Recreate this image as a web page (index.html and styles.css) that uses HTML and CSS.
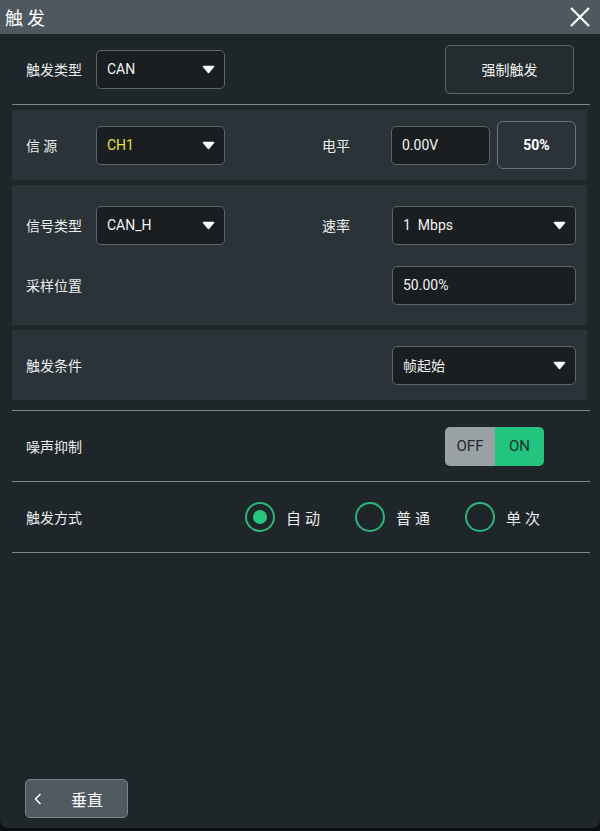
FILE: index.html
```html
<!DOCTYPE html>
<html lang="zh-CN">
<head>
  <meta charset="UTF-8">
  <title>触发</title>
  <link rel="stylesheet" href="styles.css">
</head>
<body>
  <div class="window">
    <div class="header">
      <span class="title">触 发</span>
      <svg class="close" width="22" height="22" viewBox="0 0 22 22">
        <path d="M2 2 L20 20 M20 2 L2 20" stroke="#fff" stroke-width="2.2" fill="none"/>
      </svg>
    </div>

    <div class="content">
      <!-- trigger type -->
      <div class="top-row">
        <span class="label">触发类型</span>
        <div class="select w-small">
          <span>CAN</span>
          <svg class="arrow" width="13" height="9" viewBox="0 0 13 9"><path d="M1.5 1.5 H11.5 L6.5 7.5 Z" fill="#fff" stroke="#fff" stroke-width="1.6" stroke-linejoin="round"/></svg>
        </div>
        <button class="force">强制触发</button>
      </div>

      <div class="section s-short">
        <span class="label">信 源</span>
        <div class="select w-small">
          <span class="yellow">CH1</span>
          <svg class="arrow" width="13" height="9" viewBox="0 0 13 9"><path d="M1.5 1.5 H11.5 L6.5 7.5 Z" fill="#fff" stroke="#fff" stroke-width="1.6" stroke-linejoin="round"/></svg>
        </div>
        <span></span>
        <span class="label">电平</span>
        <div class="level">
          <div class="input w-level">0.00V</div>
          <button class="half">50%</button>
        </div>
      </div>

      <div class="section s-tall">
        <span class="label">信号类型</span>
        <div class="select w-small">
          <span>CAN_H</span>
          <svg class="arrow" width="13" height="9" viewBox="0 0 13 9"><path d="M1.5 1.5 H11.5 L6.5 7.5 Z" fill="#fff" stroke="#fff" stroke-width="1.6" stroke-linejoin="round"/></svg>
        </div>
        <span></span>
        <span class="label">速率</span>
        <div class="select">
          <span>1&nbsp; Mbps</span>
          <svg class="arrow" width="13" height="9" viewBox="0 0 13 9"><path d="M1.5 1.5 H11.5 L6.5 7.5 Z" fill="#fff" stroke="#fff" stroke-width="1.6" stroke-linejoin="round"/></svg>
        </div>

        <span class="label">采样位置</span>
        <span></span>
        <span></span>
        <span></span>
        <div class="input">50.00%</div>
      </div>

      <div class="section s-short">
        <span class="label">触发条件</span>
        <span></span>
        <span></span>
        <span></span>
        <div class="select">
          <span>帧起始</span>
          <svg class="arrow" width="13" height="9" viewBox="0 0 13 9"><path d="M1.5 1.5 H11.5 L6.5 7.5 Z" fill="#fff" stroke="#fff" stroke-width="1.6" stroke-linejoin="round"/></svg>
        </div>
      </div>

      <div class="divider"></div>

      <div class="row">
        <span class="label">噪声抑制</span>
        <div class="toggle">
          <span class="off">OFF</span>
          <span class="on">ON</span>
        </div>
      </div>

      <div class="row">
        <span class="label">触发方式</span>
        <div class="radios">
          <div class="radio"><span class="ring checked"></span><span class="rlabel">自动</span></div>
          <div class="radio"><span class="ring"></span><span class="rlabel">普通</span></div>
          <div class="radio"><span class="ring"></span><span class="rlabel">单次</span></div>
        </div>
      </div>
    </div>

    <div class="footer">
      <button class="back">
        <svg width="8" height="12" viewBox="0 0 8 12"><path d="M6.5 1 L1.5 6 L6.5 11" stroke="#fff" stroke-width="1.5" fill="none"/></svg>
        <span>垂直</span>
      </button>
    </div>
  </div>
</body>
</html>
```

FILE: styles.css
```css
* {
  box-sizing: border-box;
}

body {
  margin: 0;
  width: 600px;
  height: 831px;
  background: #0c0e0f;
  font-family: "Noto Sans CJK SC", "Noto Sans", sans-serif;
  color: #eceeef;
}

.window {
  height: 828px;
  background: #1f2629;
  border-radius: 0 0 8px 8px;
  display: flex;
  flex-direction: column;
}

.header {
  height: 34px;
  background: #4e595f;
  display: flex;
  align-items: center;
  justify-content: space-between;
  padding: 0 9px 0 5px;
}

.title {
  font-size: 18px;
  color: #fff;
}

.content {
  padding: 0 10px 0 12px;
  flex: 1;
}

.label {
  font-size: 14px;
  color: #eceeef;
}

.top-row {
  height: 71px;
  display: flex;
  align-items: center;
  padding: 0 0 0 14px;
  border-bottom: 1px solid #80878b;
}

.top-row .label {
  width: 70px;
}

.select, .input {
  height: 39px;
  background: #1a1e21;
  border: 1px solid #5c6569;
  border-radius: 5px;
  display: flex;
  align-items: center;
  justify-content: space-between;
  padding: 0 9px 0 10px;
  font-family: Roboto, "Noto Sans CJK SC", sans-serif;
  font-size: 14px;
  color: #f2f2f2;
}

.w-small {
  width: 129px;
}

.yellow {
  color: #e8e23a;
}

.force {
  margin-left: auto;
  margin-right: 16px;
  width: 129px;
  height: 49px;
  background: #252c30;
  border: 1px solid #5c6569;
  border-radius: 5px;
  color: #f2f2f2;
  font-family: "Noto Sans CJK SC", sans-serif;
  font-size: 14px;
}

.section {
  background: #2a3338;
  margin-top: 5px;
  display: grid;
  grid-template-columns: 70px 130px 96px 70px 184px;
  align-items: center;
  padding-left: 14px;
  margin-right: 3px;
}

.s-short {
  height: 70px;
}

.s-tall {
  height: 140px;
  align-content: center;
  row-gap: 21px;
}

.level {
  display: flex;
  gap: 7px;
  align-items: center;
}

.w-level {
  width: 99px;
  margin-left: -1px;
}

.half {
  width: 79px;
  height: 48px;
  background: #2b3338;
  border: 1px solid #6a7377;
  border-radius: 6px;
  color: #fff;
  font-family: Roboto, sans-serif;
  font-weight: bold;
  font-size: 14px;
}

.divider {
  margin-top: 10px;
  height: 1px;
  background: #80878b;
}

.row {
  height: 71px;
  display: flex;
  align-items: center;
  padding-left: 14px;
  border-bottom: 1px solid #80878b;
}

.toggle {
  margin-left: auto;
  margin-right: 46px;
  display: flex;
  height: 39px;
  border-radius: 5px;
  overflow: hidden;
  font-family: Roboto, sans-serif;
  font-size: 15px;
}

.toggle span {
  width: 50px;
  display: flex;
  align-items: center;
  justify-content: center;
}

.toggle .off {
  background: #9aa1a5;
  color: #242a2e;
}

.toggle .on {
  width: 49px;
  background: #23c47f;
  color: #133424;
}

.radios {
  display: flex;
  margin-left: 163px;
  gap: 25px;
}

.radio {
  display: flex;
  align-items: center;
  gap: 11px;
}

.ring {
  width: 30px;
  height: 30px;
  border: 2.5px solid #2bb87b;
  border-radius: 50%;
  display: flex;
  align-items: center;
  justify-content: center;
}

.ring.checked::after {
  content: "";
  width: 14px;
  height: 14px;
  border-radius: 50%;
  background: #27c67f;
}

.rlabel {
  font-size: 15px;
  letter-spacing: 4px;
  width: 44px;
}

.footer {
  padding: 0 0 10px 25px;
}

.back {
  width: 103px;
  height: 39px;
  background: #4f5a60;
  border: 1px solid #7a8388;
  border-radius: 5px;
  display: flex;
  align-items: center;
  padding: 0 0 0 8px;
  color: #fff;
  font-family: "Noto Sans CJK SC", sans-serif;
  font-size: 16px;
}

.back span {
  margin-left: 29px;
}
```
